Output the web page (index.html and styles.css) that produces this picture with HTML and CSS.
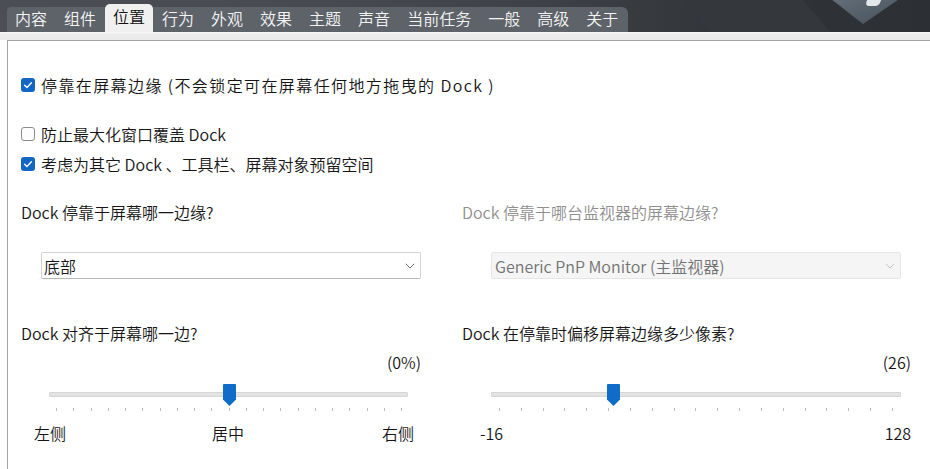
FILE: index.html
```html
<!DOCTYPE html>
<html lang="zh-CN">
<head>
<meta charset="utf-8">
<title>位置</title>
<link rel="stylesheet" href="styles.css">
</head>
<body>
<div class="app">
  <header class="topbar">
    <nav class="tabs">
      <span class="tab">内容</span>
      <span class="tab">组件</span>
      <span class="tab active">位置</span>
      <span class="tab">行为</span>
      <span class="tab">外观</span>
      <span class="tab">效果</span>
      <span class="tab">主题</span>
      <span class="tab">声音</span>
      <span class="tab">当前任务</span>
      <span class="tab">一般</span>
      <span class="tab">高级</span>
      <span class="tab">关于</span>
    </nav>
    <div class="decor"><span class="band-dark"></span><span class="gem"></span><span class="glint"></span></div>
  </header>
  <div class="band"></div>
  <main class="panel">
    <label class="check-row r1">
      <span class="box checked"><svg viewBox="0 0 14 14" width="14" height="14"><path d="M3.6 7.2 L6 9.4 L10.4 4.8" fill="none" stroke="#fff" stroke-width="1.4" stroke-linecap="round" stroke-linejoin="round"/></svg></span>
      <span class="wide">停靠在屏幕边缘 (不会锁定可在屏幕任何地方拖曳的 Dock )</span>
    </label>
    <label class="check-row r2">
      <span class="box"></span>
      <span>防止最大化窗口覆盖 Dock</span>
    </label>
    <label class="check-row r3">
      <span class="box checked"><svg viewBox="0 0 14 14" width="14" height="14"><path d="M3.6 7.2 L6 9.4 L10.4 4.8" fill="none" stroke="#fff" stroke-width="1.4" stroke-linecap="round" stroke-linejoin="round"/></svg></span>
      <span>考虑为其它 Dock 、工具栏、屏幕对象预留空间</span>
    </label>

    <div class="grid">
      <section class="col col-left">
        <div class="q">Dock 停靠于屏幕哪一边缘?</div>
        <div class="select">
          <span>底部</span>
          <svg class="chev" viewBox="0 0 10 6" width="10" height="6"><path d="M0.8 0.8 L5 5 L9.2 0.8" fill="none" stroke="#6a6a6a" stroke-width="1"/></svg>
        </div>
        <div class="q q2">Dock 对齐于屏幕哪一边?</div>
        <div class="value">(0%)</div>
        <div class="slider-wrap">
          <div class="slider">
            <div class="track"></div>
            <svg class="thumb" style="left:174px" viewBox="0 0 13 22" width="13" height="22"><path d="M1 0 H12 A1 1 0 0 1 13 1 V15.5 L6.5 22 L0 15.5 V1 A1 1 0 0 1 1 0 Z" fill="#0f6cc8"/></svg>
          </div>
          <div class="ticks">
            <i></i><i></i><i></i><i></i><i></i><i></i><i></i><i></i><i></i><i></i><i></i><i></i><i></i><i></i><i></i><i></i><i></i><i></i><i></i><i></i><i></i>
          </div>
        </div>
        <div class="scale">
          <span>左侧</span><span class="mid">居中</span><span>右侧</span>
        </div>
      </section>

      <section class="col col-right">
        <div class="q disabled">Dock 停靠于哪台监视器的屏幕边缘?</div>
        <div class="select select-disabled">
          <span>Generic PnP Monitor (主监视器)</span>
          <svg class="chev" viewBox="0 0 10 6" width="10" height="6"><path d="M0.8 0.8 L5 5 L9.2 0.8" fill="none" stroke="#c4c4c4" stroke-width="1"/></svg>
        </div>
        <div class="q q2">Dock 在停靠时偏移屏幕边缘多少像素?</div>
        <div class="value">(26)</div>
        <div class="slider-wrap">
          <div class="slider">
            <div class="track"></div>
            <svg class="thumb" style="left:116px" viewBox="0 0 13 22" width="13" height="22"><path d="M1 0 H12 A1 1 0 0 1 13 1 V15.5 L6.5 22 L0 15.5 V1 A1 1 0 0 1 1 0 Z" fill="#0f6cc8"/></svg>
          </div>
          <div class="ticks">
            <i></i><i></i><i></i><i></i><i></i><i></i><i></i><i></i><i></i><i></i><i></i><i></i><i></i><i></i><i></i><i></i><i></i><i></i><i></i>
          </div>
        </div>
        <div class="scale">
          <span>-16</span><span>128</span>
        </div>
      </section>
    </div>
  </main>
</div>
</body>
</html>
```

FILE: styles.css
```css
* { box-sizing: border-box; }
html, body { margin: 0; padding: 0; }
body {
  width: 930px;
  height: 469px;
  overflow: hidden;
  background: #ffffff;
  font-family: "Noto Sans CJK SC", "Noto Sans", sans-serif;
  font-size: 16px;
  font-weight: 350;
  color: #151515;
}
.app { display: flex; flex-direction: column; height: 469px; }

/* top bar */
.topbar {
  position: relative;
  height: 32px;
  flex: none;
  display: flex;
  align-items: flex-end;
  background: linear-gradient(90deg, #4b4f55 0%, #474b51 35%, #3d4045 60%, #303338 80%, #2c2f34 100%);
  overflow: hidden;
}
.tabs {
  position: relative;
  z-index: 2;
  margin-left: 7px;
  height: 25px;
  display: flex;
  align-items: flex-end;
  gap: 1px;
  background: #5e636a;
  border-radius: 4px 6px 0 0;
  padding-right: 2px;
}
.tab {
  height: 25px;
  line-height: 22px;
  padding: 0 8px;
  color: #f4f4f4;
  white-space: nowrap;
}
.tab.active {
  height: 28px;
  padding-bottom: 3px;
  line-height: 25px;
  background: #f0f0f0;
  color: #111;
  border-radius: 5px 5px 0 0;
}
.decor { position: absolute; inset: 0; z-index: 1; pointer-events: none; }
.band-dark {
  position: absolute;
  left: 700px; top: -10px;
  width: 120px; height: 60px;
  background: #34373c;
  transform: skewX(40deg);
}
.gem {
  position: absolute;
  left: 832px; top: -20px;
  width: 66px; height: 44px;
  background: linear-gradient(160deg, #6f7a85 0%, #56616b 60%, #4a535d 100%);
  clip-path: polygon(0 45%, 100% 45%, 47% 100%);
}
.glint {
  position: absolute;
  left: 866px; top: 0;
  width: 14px; height: 6px;
  background: #e3e7ea;
  border-radius: 0 0 4px 4px;
  transform: skewX(-20deg);
}

.band {
  height: 8px;
  flex: none;
  background: linear-gradient(180deg, #f8f8f8 0px, #f8f8f8 1px, #ebebeb 2px, #ebebeb 100%);
}

/* panel */
.panel {
  flex: 1;
  margin-left: 7px;
  border-left: 1px solid #a3a3a3;
  border-top: 1px solid #a3a3a3;
  background: #fff;
  padding-left: 13px;
  display: flex;
  flex-direction: column;
}
.check-row {
  display: flex;
  align-items: center;
  gap: 6px;
  height: 20px;
  line-height: 20px;
  white-space: nowrap;
}
.wide { letter-spacing: 1.4px; }
.r1 { margin-top: 34px; }
.r2 { margin-top: 29px; }
.r3 { margin-top: 10px; }
.box {
  width: 14px; height: 14px;
  flex: none;
  border: 1px solid #8a8a8a;
  border-radius: 3px;
  background: #fdfdfd;
  display: block;
}
.box svg { display: block; }
.box.checked {
  border: none;
  background: #1367c4;
}

.grid {
  margin-top: 28px;
  display: grid;
  grid-template-columns: 400px 449px;
  column-gap: 41px;
}
.col { display: flex; flex-direction: column; }
.q { height: 20px; line-height: 20px; white-space: nowrap; }
.q.disabled { color: #8f8f8f; }
.q2 { margin-top: 44px; }

.select {
  margin-top: 30px;
  height: 27px;
  display: flex;
  align-items: center;
  justify-content: space-between;
  border: 1px solid #d3d3d3;
  border-bottom-color: #b9b9b9;
  border-radius: 2px;
  background: #fff;
  padding: 0 5px 0 2px;
  white-space: nowrap;
}
.col-left .select { margin-left: 20px; }
.col-right .select { margin-left: 29px; margin-right: 10px; }
.select-disabled {
  background: #f5f5f5;
  border-color: #e6e6e6;
  color: #727272;
  padding-left: 3px;
}
.chev { display: block; flex: none; }

.value {
  margin-top: 9px;
  height: 20px;
  line-height: 20px;
  text-align: right;
}

.slider-wrap { margin-top: 12px; }
.col-left .slider-wrap { margin-left: 28px; margin-right: 13px; }
.col-right .slider-wrap { margin-left: 29px; margin-right: 10px; }
.slider { position: relative; height: 22px; }
.track {
  position: absolute;
  left: 0; right: 0; top: 8px;
  height: 5px;
  background: #e4e4e4;
  border: 1px solid #d6d6d6;
  border-radius: 1px;
}
.thumb { position: absolute; top: 0; display: block; }
.ticks {
  margin-top: 2px;
  height: 4px;
  display: flex;
  justify-content: space-between;
}
.col-left .ticks { padding: 0 6px 0 7px; }
.col-right .ticks { padding: 0 8px; }
.ticks i {
  display: block;
  width: 1px; height: 3px;
  background: #bdbdbd;
}

.scale {
  margin-top: 11px;
  height: 20px;
  line-height: 20px;
  display: flex;
  justify-content: space-between;
}
.scale .mid { margin-left: 8px; }
.col-left .scale { margin-left: 13px; margin-right: 7px; }
.col-right .scale { margin-left: 18px; }
```
